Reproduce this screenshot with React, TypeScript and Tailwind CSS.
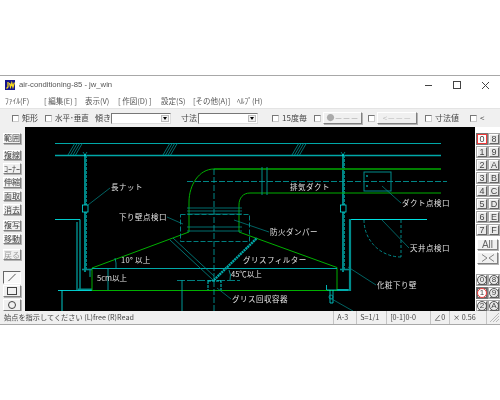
import type { ReactNode } from 'react';

const jp = "font-['Noto_Sans_CJK_JP','Noto_Sans',sans-serif]";
const raised =
  'border border-t-white border-l-white border-r-[#808080] border-b-[#808080] bg-[#f0f0f0] shadow-[1px_1px_0_#b4b4b4]';

const menus: [string, string][] = [
  ['ﾌｧｲﾙ(F)', 'ml-[5px] w-[39px]'],
  ['[ 編集(E) ]', 'w-[41px]'],
  ['表示(V)', 'w-[33px]'],
  ['[ 作図(D) ]', 'w-[43px]'],
  ['設定(S)', 'w-[32px]'],
  ['[その他(A)]', 'w-[44px]'],
  ['ﾍﾙﾌﾟ(H)', 'w-[30px]'],
];

function Check({ className, children }: { className: string; children?: ReactNode }) {
  return (
    <div className={`flex items-center gap-[3px] ${className}`}>
      <span className="h-[7px] w-[7px] shrink-0 border border-t-[#777] border-l-[#777] border-r-[#ccc] border-b-[#ccc] bg-white" />
      {children && <span>{children}</span>}
    </div>
  );
}

function Combo({ className }: { className: string }) {
  return (
    <div className={`flex h-[11px] items-center justify-end border border-t-[#777] border-l-[#777] border-r-[#ddd] border-b-[#ddd] bg-white ${className}`}>
      <div className="mr-px flex h-[7px] w-[8px] items-center justify-center border border-[#bbb] bg-[#f0f0f0]">
        <span className="h-0 w-0 border-x-[2.5px] border-t-[3px] border-x-transparent border-t-black" />
      </div>
    </div>
  );
}

function SideBtn({ label, className = '', dim = false }: { label: string; className?: string; dim?: boolean }) {
  return (
    <div
      className={`ml-[3px] flex h-[11px] w-[18px] items-center justify-center overflow-hidden whitespace-nowrap text-[8px] leading-none ${raised} ${dim ? 'text-[#a0a0a0]' : 'text-[#444]'} ${className}`}
    >
      {label}
    </div>
  );
}

function LayerBtn({ label, active, circled, className = '' }: { label: string; active?: boolean; circled?: boolean; className?: string }) {
  const box = active
    ? circled
      ? 'border border-[#666] bg-[#d8d8d8] shadow-[0_0_0_1px_#777]'
      : 'border border-[#f03a3a] bg-white shadow-[0_0_0_1px_#777]'
    : 'border border-t-white border-l-white border-r-[#666] border-b-[#666] bg-[#e8e8e8] shadow-[0_0_0_1px_#a8a8a8]';
  return (
    <div className={`flex h-[10px] w-[10px] items-center justify-center text-[9px] leading-none text-[#444] ${box} ${className}`}>
      {circled ? (
        <span
          className={`flex h-[10px] w-[10px] shrink-0 items-center justify-center rounded-full border text-[8px] leading-none ${
            active ? 'border-[#f03a3a] bg-white' : 'border-[#555]'
          }`}
        >
          {label}
        </span>
      ) : (
        label
      )}
    </div>
  );
}

function StatusCell({ className, children }: { className: string; children?: ReactNode }) {
  return (
    <div className={`flex h-full items-center border-l border-[#c4c4c4] pl-[3px] ${className}`}>{children}</div>
  );
}

const CYAN = '#00e0e0';
const TEAL = '#008c8c';
const GREEN = '#00b000';
const DIM = '#00a8a8';

function Label({ x, y, children, spacing = 0.5 }: { x: number; y: number; children: string; spacing?: number }) {
  return (
    <text x={x} y={y} fill="#e0e0e0" fontSize="7.5" letterSpacing={spacing} fontFamily="'Noto Sans CJK JP',sans-serif">
      {children}
    </text>
  );
}

function Hatch({ x }: { x: number }) {
  return (
    <g stroke={TEAL} strokeWidth="0.8">
      {[0, 2.5, 5, 7.5].map((d) => (
        <line key={d} x1={x + d} y1={155} x2={x + d + 7} y2={143} />
      ))}
    </g>
  );
}

function Hanger({ x }: { x: number }) {
  return (
    <g>
      <path d={`M${x - 2} 152L${x} 155L${x + 2} 152`} fill="none" stroke={DIM} strokeWidth="0.7" />
      <line x1={x} y1={154} x2={x} y2={272} stroke={CYAN} strokeWidth="1.2" />
      <line x1={x + 1.5} y1={155} x2={x + 1.5} y2={270} stroke={TEAL} strokeWidth="0.9" strokeDasharray="3 1" />
      <rect x={x - 2.5} y={205} width="5.5" height="7" fill="#000" stroke={CYAN} strokeWidth="0.8" />
      <path d={`M${x - 3} 269.5H${x + 7}`} stroke={TEAL} strokeWidth="1.6" />
    </g>
  );
}

function Drawing() {
  return (
    <svg viewBox="25 127 450 184" className="h-full w-full bg-black">
      {/* ceiling */}
      <line x1="55" y1="143.5" x2="441" y2="143.5" stroke={DIM} strokeWidth="1" />
      <line x1="55" y1="155.5" x2="441" y2="155.5" stroke={DIM} strokeWidth="1.5" />
      <Hatch x={68} />
      <Hatch x={163} />
      <Hatch x={292} />

      <Hanger x={85} />
      <Hanger x={343} />

      {/* left wall */}
      <path d="M55 219.5H80V290M77 222V290" fill="none" stroke={CYAN} strokeWidth="0.9" />
      <path d="M78 289.5H92" stroke={TEAL} strokeWidth="2" />
      <path d="M58 290.5H92M62 290V311" fill="none" stroke={CYAN} strokeWidth="0.9" />
      <path d="M90 270V277" fill="none" stroke={TEAL} strokeWidth="1.2" />

      {/* right wall */}
      <path d="M350 219.5H427" stroke={CYAN} strokeWidth="1.1" />
      <path d="M350 219V290H337" fill="none" stroke={TEAL} strokeWidth="2.2" />
      <path d="M401 220V257M364 220A37 37 0 0 0 401 257" fill="none" stroke={DIM} strokeWidth="0.8" strokeDasharray="3 2" />

      {/* duct + hood */}
      <path d="M441 169H214C199 169 189 185 189 202V232L92 268V290.5H337V267.5L239 232V205C239 198 243 193 250 193H441" fill="none" stroke={GREEN} strokeWidth="1" />
      <path d="M214 169H441" stroke="#008c00" strokeWidth="1.4" />
      <path d="M92 268.5H337" stroke={DIM} strokeWidth="1" />
      <path d="M262 167V195M267 167V195" stroke={TEAL} strokeWidth="1" />
      <path d="M187 181.5H447" stroke={DIM} strokeWidth="0.8" strokeDasharray="6 2" />
      <path d="M214 169V311" stroke={DIM} strokeWidth="0.8" strokeDasharray="6 2" />

      {/* damper */}
      <rect x="180.5" y="214.5" width="69" height="27" fill="none" stroke={TEAL} strokeWidth="0.9" strokeDasharray="5 2" />
      <path d="M187 208H242M187 211H242M187 214H242M187 227H242M187 231H242" stroke={TEAL} strokeWidth="0.8" />

      {/* filter + collector */}
      <path d="M170 240L213 280M173 238L214 276" stroke={TEAL} strokeWidth="0.8" />
      <path d="M214 280L257 238" stroke={DIM} strokeWidth="2.4" strokeDasharray="2 0.6" />
      <path d="M177 280.5H240" stroke={TEAL} strokeWidth="0.9" strokeDasharray="8 2" />
      <path d="M182 280V311" stroke={DIM} strokeWidth="0.9" />
      <path d="M208 281H221V290M208 281V290" fill="none" stroke={CYAN} strokeWidth="0.9" strokeDasharray="3 1" />
      <path d="M229 270A14 14 0 0 1 230 280" fill="none" stroke={DIM} strokeWidth="0.8" />

      {/* right collector */}
      <path d="M326.5 285V290M348 290H327M330 290V303H333V290" fill="none" stroke={CYAN} strokeWidth="0.8" />
      <circle cx="331" cy="297" r="2" fill="none" stroke={DIM} strokeWidth="0.8" />

      {/* duct inspection box */}
      <rect x="364" y="172" width="27" height="19" fill="none" stroke={TEAL} strokeWidth="1" />
      <circle cx="367" cy="176" r="0.9" fill={DIM} />
      <circle cx="367" cy="186" r="0.9" fill={DIM} />

      {/* dimensions */}
      <path d="M108 268V290" stroke={DIM} strokeWidth="0.9" />
      <path d="M115 258A26 26 0 0 1 116 268" fill="none" stroke={DIM} strokeWidth="0.8" />

      {/* leaders */}
      <g stroke={TEAL} strokeWidth="0.7">
        <line x1="88" y1="205" x2="110" y2="188" />
        <line x1="167" y1="217" x2="183" y2="224" />
        <line x1="234" y1="220" x2="269" y2="232" />
        <line x1="217" y1="288" x2="231" y2="299" />
        <line x1="382" y1="186" x2="401" y2="203" />
        <line x1="382" y1="220" x2="409" y2="248" />
        <line x1="348" y1="267" x2="376" y2="285" />
        <line x1="330" y1="298" x2="353" y2="311" />
      </g>

      <Label x={111} y={190}>長ナット</Label>
      <Label x={119} y={220}>下り壁点検口</Label>
      <Label x={121} y={263} spacing={0.3}>10° 以上</Label>
      <Label x={97} y={281} spacing={0}>5cm以上</Label>
      <Label x={270} y={235}>防火ダンパー</Label>
      <Label x={290} y={190}>排気ダクト</Label>
      <Label x={243} y={263}>グリスフィルター</Label>
      <Label x={231} y={277} spacing={0}>45℃以上</Label>
      <Label x={232} y={302}>グリス回収容器</Label>
      <Label x={402} y={206}>ダクト点検口</Label>
      <Label x={410} y={251}>天井点検口</Label>
      <Label x={377} y={288}>化粧下り壁</Label>
    </svg>
  );
}

export default function App() {
  return (
    <div className={`flex h-[400px] w-[500px] flex-col bg-white pt-[75px] text-[#333] ${jp}`}>
      <div className="flex h-[250px] w-[500px] flex-col border-t border-b border-[#a8a8a8] bg-white blur-[0.3px]">
        {/* title bar */}
        <div className="flex h-[17px] shrink-0 items-center">
          <svg viewBox="0 0 10 10" className="ml-[5px] h-[10px] w-[10px]">
            <rect width="10" height="10" fill="#14148c" />
            <path d="M3 2V7L1.5 8.5M4.5 3L5.5 7L6.8 3L8 7L9.5 2.5" fill="none" stroke="#f5d820" strokeWidth="1.3" />
          </svg>
          <span className="ml-[4px] font-['Liberation_Sans',sans-serif] text-[7.7px] leading-none text-[#555]">
            air-conditioning-85 - jw_win
          </span>
          <svg viewBox="0 0 72 10" className="ml-auto mr-[10px] h-[10px] w-[72px]" fill="none" stroke="#444" strokeWidth="1">
            <path d="M7 5.5H14" />
            <rect x="35.5" y="1.5" width="7" height="7" />
            <path d="M64 2L71 9M71 2L64 9" />
          </svg>
        </div>
        {/* menu */}
        <div className="flex h-[15px] shrink-0 items-center whitespace-nowrap text-[7.5px] leading-none text-[#555]">
          {menus.map(([label, width]) => (
            <span key={label} className={width}>
              {label}
            </span>
          ))}
        </div>
        {/* tool bar */}
        <div className="flex h-[19px] shrink-0 items-center whitespace-nowrap border-t border-[#e4e4e4] bg-[#f0f0f0] text-[8px] leading-none text-[#444]">
          <Check className="ml-[12px] w-[26px]">矩形</Check>
          <Check className="ml-[7px] w-[44px] text-[7.5px]">水平･垂直</Check>
          <span className="ml-[6px] w-[16px]">傾き</span>
          <Combo className="w-[60px]" />
          <span className="ml-[10px] w-[16px]">寸法</span>
          <Combo className="ml-px w-[60px]" />
          <Check className="ml-[14px] w-[36px]">15度毎</Check>
          <Check className="ml-[6px] w-[7px]" />
          <div className={`ml-[2px] flex h-[12px] w-[39px] items-center justify-center text-[8px] text-[#aaa] ${raised}`}>●－－－</div>
          <Check className="ml-[6px] w-[7px]" />
          <div className={`ml-[2px] flex h-[12px] w-[40px] items-center justify-center text-[8px] text-[#bbb] ${raised}`}>&lt;－－－</div>
          <Check className="ml-[8px] w-[33px]">寸法値</Check>
          <Check className="ml-[12px]">&lt;</Check>
        </div>
        {/* main */}
        <div className="flex min-h-0 flex-1">
          <div className="flex w-[25px] shrink-0 flex-col overflow-hidden bg-[#f0f0f0] pt-[6px]">
            <SideBtn label="範囲" />
            <SideBtn label="複線" className="mt-[6px]" />
            <SideBtn label="ｺｰﾅｰ" className="mt-[3px]" />
            <SideBtn label="伸縮" className="mt-[3px]" />
            <SideBtn label="面取" className="mt-[3px]" />
            <SideBtn label="消去" className="mt-[3px]" />
            <SideBtn label="複写" className="mt-[5px]" />
            <SideBtn label="移動" className="mt-[3px]" />
            <SideBtn label="戻る" dim className="mt-[5px]" />
            <div className="ml-[3px] mt-[11px] flex h-[13px] w-[18px] shrink-0 items-center justify-center border border-t-[#666] border-l-[#666] border-r-white border-b-white bg-[#f8f8f8]">
              <svg viewBox="0 0 12 10" className="h-[9px] w-[12px]" fill="none" stroke="#444">
                <path d="M2 9L10 1" />
              </svg>
            </div>
            <div className={`ml-[3px] mt-px flex h-[12px] w-[18px] shrink-0 items-center justify-center ${raised}`}>
              <span className="h-[8px] w-[10px] border border-[#444]" />
            </div>
            <div className={`ml-[3px] mt-[2px] flex h-[12px] w-[18px] shrink-0 items-center justify-center ${raised}`}>
              <span className="h-[8px] w-[8px] rounded-full border border-[#444]" />
            </div>
          </div>
          <div className="h-[184px] w-[450px] shrink-0 self-end">
            <Drawing />
          </div>
          <div className="flex flex-1 flex-col items-start overflow-hidden bg-white pl-[2px] pt-[7px] font-['Liberation_Sans',sans-serif]">
            <div className="grid grid-cols-[10px_10px] gap-x-[2px] gap-y-[3px]">
              {['0', '8', '1', '9', '2', 'A', '3', 'B', '4', 'C', '5', 'D', '6', 'E', '7', 'F'].map((k) => (
                <LayerBtn key={k} label={k} active={k === '0'} />
              ))}
            </div>
            <div className={`mt-[4px] flex h-[11px] w-[21px] items-center justify-center text-[10px] leading-none text-[#666] ${raised}`}>
              All
            </div>
            <div className={`mt-[2px] flex h-[12px] w-[21px] items-center justify-center ${raised}`}>
              <svg viewBox="0 0 14 8" className="h-[8px] w-[14px]" fill="none" stroke="#777" strokeWidth="0.9">
                <path d="M1 0.5L6 4L1 7.5M13 0.5L8 4L13 7.5" />
              </svg>
            </div>
            <div className="mt-[11px] grid grid-cols-[10px_10px] gap-x-[2px] gap-y-[3px]">
              {['0', '8', '1', '9', '2', 'A'].map((k) => (
                <LayerBtn key={k} label={k} circled active={k === '1'} className={k === '2' ? 'border-t-[#c020d0]' : ''} />
              ))}
            </div>
          </div>
        </div>
        {/* status bar */}
        <div className="flex h-[13px] shrink-0 items-center whitespace-nowrap bg-[#f0f0f0] text-[7.2px] leading-none text-[#444]">
          <span className="ml-[4px] w-[330px]">始点を指示してください (L)free (R)Read</span>
          <StatusCell className="w-[23px]">A-3</StatusCell>
          <StatusCell className="w-[30px]">S=1/1</StatusCell>
          <StatusCell className="w-[44px]">[0-1]0-0</StatusCell>
          <StatusCell className="w-[19px]">∠0</StatusCell>
          <StatusCell className="w-[37px]">× 0.56</StatusCell>
          <StatusCell className="flex-1">
            <svg viewBox="0 0 9 9" className="ml-auto mr-px h-[9px] w-[9px]" stroke="#aaa" strokeWidth="0.8">
              <path d="M0 9L9 0M3 9L9 3M6 9L9 6" />
            </svg>
          </StatusCell>
        </div>
      </div>
    </div>
  );
}
